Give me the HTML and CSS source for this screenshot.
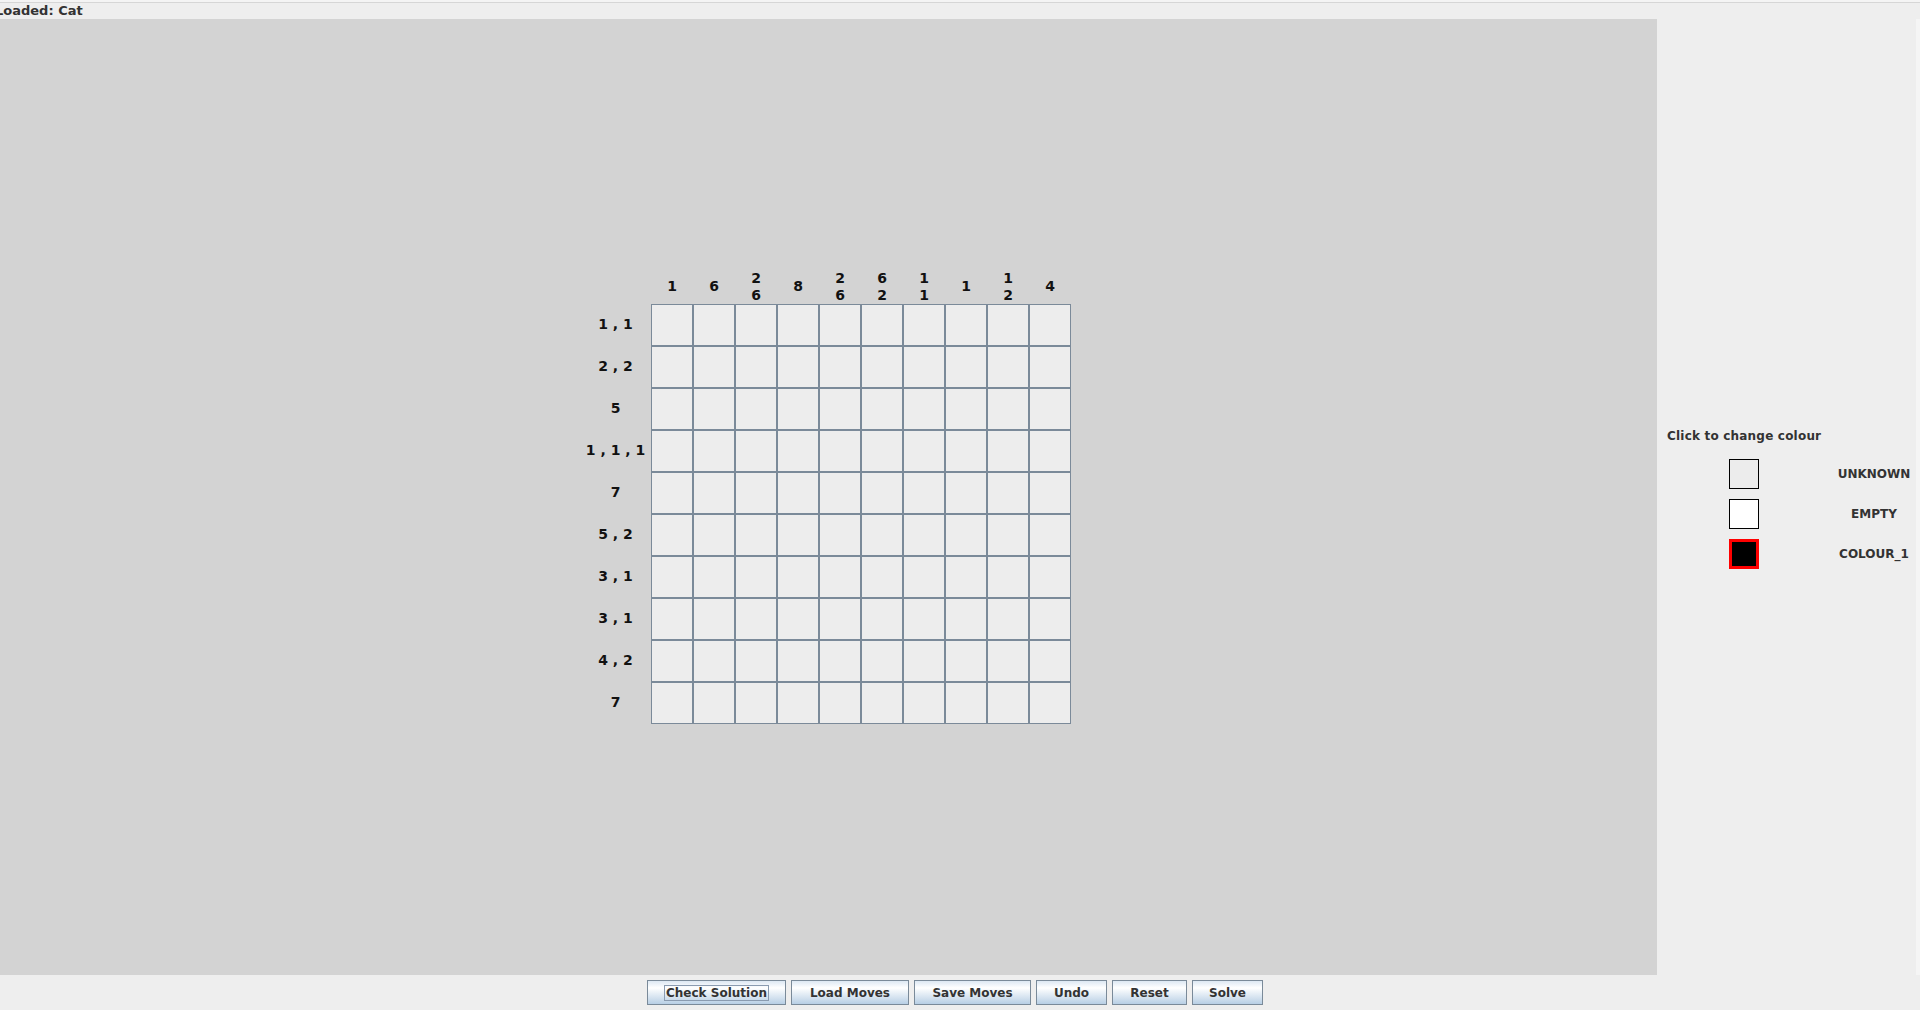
FILE: index.html
```html
<!DOCTYPE html>
<html>
<head>
<meta charset="utf-8">
<title>Nonogram</title>
<link rel="stylesheet" href="styles.css">
</head>
<body>
<div class="app">
  <div class="status"><span class="status-text">Loaded: Cat</span></div>
  <div class="main">
    <div class="board-area">
      <div class="board">
        <div class="corner"></div>
        <div class="col-clues">
          <div class="col-clue"><span>1</span></div>
          <div class="col-clue"><span>6</span></div>
          <div class="col-clue"><span>2</span><span>6</span></div>
          <div class="col-clue"><span>8</span></div>
          <div class="col-clue"><span>2</span><span>6</span></div>
          <div class="col-clue"><span>6</span><span>2</span></div>
          <div class="col-clue"><span>1</span><span>1</span></div>
          <div class="col-clue"><span>1</span></div>
          <div class="col-clue"><span>1</span><span>2</span></div>
          <div class="col-clue"><span>4</span></div>
        </div>
        <div class="row-clues">
          <div class="row-clue">1 , 1</div>
          <div class="row-clue">2 , 2</div>
          <div class="row-clue">5</div>
          <div class="row-clue">1 , 1 , 1</div>
          <div class="row-clue">7</div>
          <div class="row-clue">5 , 2</div>
          <div class="row-clue">3 , 1</div>
          <div class="row-clue">3 , 1</div>
          <div class="row-clue">4 , 2</div>
          <div class="row-clue">7</div>
        </div>
        <div class="grid">
          <div class="cell"></div><div class="cell"></div><div class="cell"></div><div class="cell"></div><div class="cell"></div><div class="cell"></div><div class="cell"></div><div class="cell"></div><div class="cell"></div><div class="cell"></div>
          <div class="cell"></div><div class="cell"></div><div class="cell"></div><div class="cell"></div><div class="cell"></div><div class="cell"></div><div class="cell"></div><div class="cell"></div><div class="cell"></div><div class="cell"></div>
          <div class="cell"></div><div class="cell"></div><div class="cell"></div><div class="cell"></div><div class="cell"></div><div class="cell"></div><div class="cell"></div><div class="cell"></div><div class="cell"></div><div class="cell"></div>
          <div class="cell"></div><div class="cell"></div><div class="cell"></div><div class="cell"></div><div class="cell"></div><div class="cell"></div><div class="cell"></div><div class="cell"></div><div class="cell"></div><div class="cell"></div>
          <div class="cell"></div><div class="cell"></div><div class="cell"></div><div class="cell"></div><div class="cell"></div><div class="cell"></div><div class="cell"></div><div class="cell"></div><div class="cell"></div><div class="cell"></div>
          <div class="cell"></div><div class="cell"></div><div class="cell"></div><div class="cell"></div><div class="cell"></div><div class="cell"></div><div class="cell"></div><div class="cell"></div><div class="cell"></div><div class="cell"></div>
          <div class="cell"></div><div class="cell"></div><div class="cell"></div><div class="cell"></div><div class="cell"></div><div class="cell"></div><div class="cell"></div><div class="cell"></div><div class="cell"></div><div class="cell"></div>
          <div class="cell"></div><div class="cell"></div><div class="cell"></div><div class="cell"></div><div class="cell"></div><div class="cell"></div><div class="cell"></div><div class="cell"></div><div class="cell"></div><div class="cell"></div>
          <div class="cell"></div><div class="cell"></div><div class="cell"></div><div class="cell"></div><div class="cell"></div><div class="cell"></div><div class="cell"></div><div class="cell"></div><div class="cell"></div><div class="cell"></div>
          <div class="cell"></div><div class="cell"></div><div class="cell"></div><div class="cell"></div><div class="cell"></div><div class="cell"></div><div class="cell"></div><div class="cell"></div><div class="cell"></div><div class="cell"></div>
        </div>
      </div>
    </div>
    <div class="palette">
      <div class="palette-title">Click to change colour</div>
      <div class="palette-list">
        <div class="swatch swatch-unknown"></div><div class="swatch-label">UNKNOWN</div>
        <div class="swatch swatch-empty"></div><div class="swatch-label">EMPTY</div>
        <div class="swatch swatch-colour selected"></div><div class="swatch-label">COLOUR_1</div>
      </div>
    </div>
    <div class="edge"></div>
  </div>
  <div class="toolbar">
    <button class="btn btn-check"><span class="focus">Check Solution</span></button>
    <button class="btn btn-load">Load Moves</button>
    <button class="btn btn-save">Save Moves</button>
    <button class="btn btn-undo">Undo</button>
    <button class="btn btn-reset">Reset</button>
    <button class="btn btn-solve">Solve</button>
  </div>
</div>
</body>
</html>
```

FILE: styles.css
```css
html, body {
  margin: 0;
  padding: 0;
  width: 1920px;
  height: 1010px;
  overflow: hidden;
  background: #eeeeee;
  font-family: "DejaVu Sans", "Liberation Sans", sans-serif;
}

.app {
  display: flex;
  flex-direction: column;
  width: 1920px;
  height: 1010px;
}

.status {
  height: 16px;
  border-top: 2px solid #f4f4f4;
  box-shadow: inset 0 1px 0 #d6d6d6;
  background: #eeeeee;
  padding-top: 1px;
  overflow: hidden;
  white-space: nowrap;
}

.status-text {
  display: block;
  margin-left: -5px;
  font-size: 13px;
  font-weight: bold;
  line-height: 16px;
  color: #333333;
}

.main {
  display: flex;
  height: 956px;
}

.board-area {
  width: 1657px;
  height: 955px;
  padding-bottom: 1px;
  background: #d3d3d3;
  display: flex;
  align-items: center;
  justify-content: center;
}

.board {
  display: grid;
  grid-template-columns: 65px 420px;
  grid-template-rows: 35px 420px;
}

.col-clues {
  display: flex;
}

.col-clue {
  width: 42px;
  height: 35px;
  display: flex;
  flex-direction: column;
  align-items: center;
  justify-content: center;
  font-size: 14px;
  font-weight: bold;
  line-height: 17px;
  color: #111111;
}

.row-clues {
  display: flex;
  flex-direction: column;
}

.row-clue {
  box-sizing: border-box;
  height: 42px;
  padding-right: 6px;
  padding-bottom: 2px;
  display: flex;
  align-items: center;
  justify-content: center;
  font-size: 14px;
  font-weight: bold;
  color: #111111;
  white-space: pre;
}

.grid {
  display: grid;
  grid-template-columns: repeat(10, 42px);
  grid-template-rows: repeat(10, 42px);
}

.cell {
  box-sizing: border-box;
  border: 1px solid #7b8a99;
  background: #ededed;
}

.palette {
  width: 259px;
  padding-top: 410px;
  background: #eeeeee;
}

.palette-title {
  padding-left: 10px;
  font-size: 12px;
  font-weight: bold;
  line-height: 14px;
  letter-spacing: 0.2px;
  color: #333333;
  white-space: nowrap;
}

.palette-list {
  margin-top: 16px;
  display: grid;
  grid-template-columns: 174px 86px;
  grid-auto-rows: 30px;
  row-gap: 10px;
  align-items: center;
}

.swatch {
  justify-self: center;
  box-sizing: border-box;
  width: 30px;
  height: 30px;
  border: 1px solid #000000;
}

.swatch-unknown {
  background: #ececec;
}

.swatch-empty {
  background: #ffffff;
}

.swatch-colour {
  background: #000000;
}

.swatch.selected {
  border: 3px solid #ff0000;
}

.swatch-label {
  text-align: center;
  font-size: 12px;
  font-weight: bold;
  color: #333333;
  white-space: nowrap;
}

.edge {
  width: 4px;
  background: #f5f5f5;
}

.toolbar {
  height: 30px;
  padding-top: 5px;
  padding-right: 10px;
  display: flex;
  justify-content: center;
  align-items: flex-start;
  gap: 5px;
  background: #eeeeee;
}

.btn {
  box-sizing: border-box;
  height: 25px;
  padding: 0;
  margin: 0;
  border: 1px solid #7a8a99;
  border-radius: 0;
  background: linear-gradient(to bottom, #dde8f3 0%, #ffffff 30%, #b8cfe5 100%);
  font-family: "DejaVu Sans", "Liberation Sans", sans-serif;
  font-size: 12px;
  font-weight: bold;
  color: #333333;
  display: flex;
  align-items: center;
  justify-content: center;
  white-space: nowrap;
}

.btn-check { width: 139px; }
.btn-load { width: 118px; }
.btn-save { width: 117px; }
.btn-undo { width: 71px; }
.btn-reset { width: 75px; }
.btn-solve { width: 71px; }

.focus {
  border: 1px solid #8a9bb0;
  padding: 0 1px;
  line-height: 14px;
}
```
